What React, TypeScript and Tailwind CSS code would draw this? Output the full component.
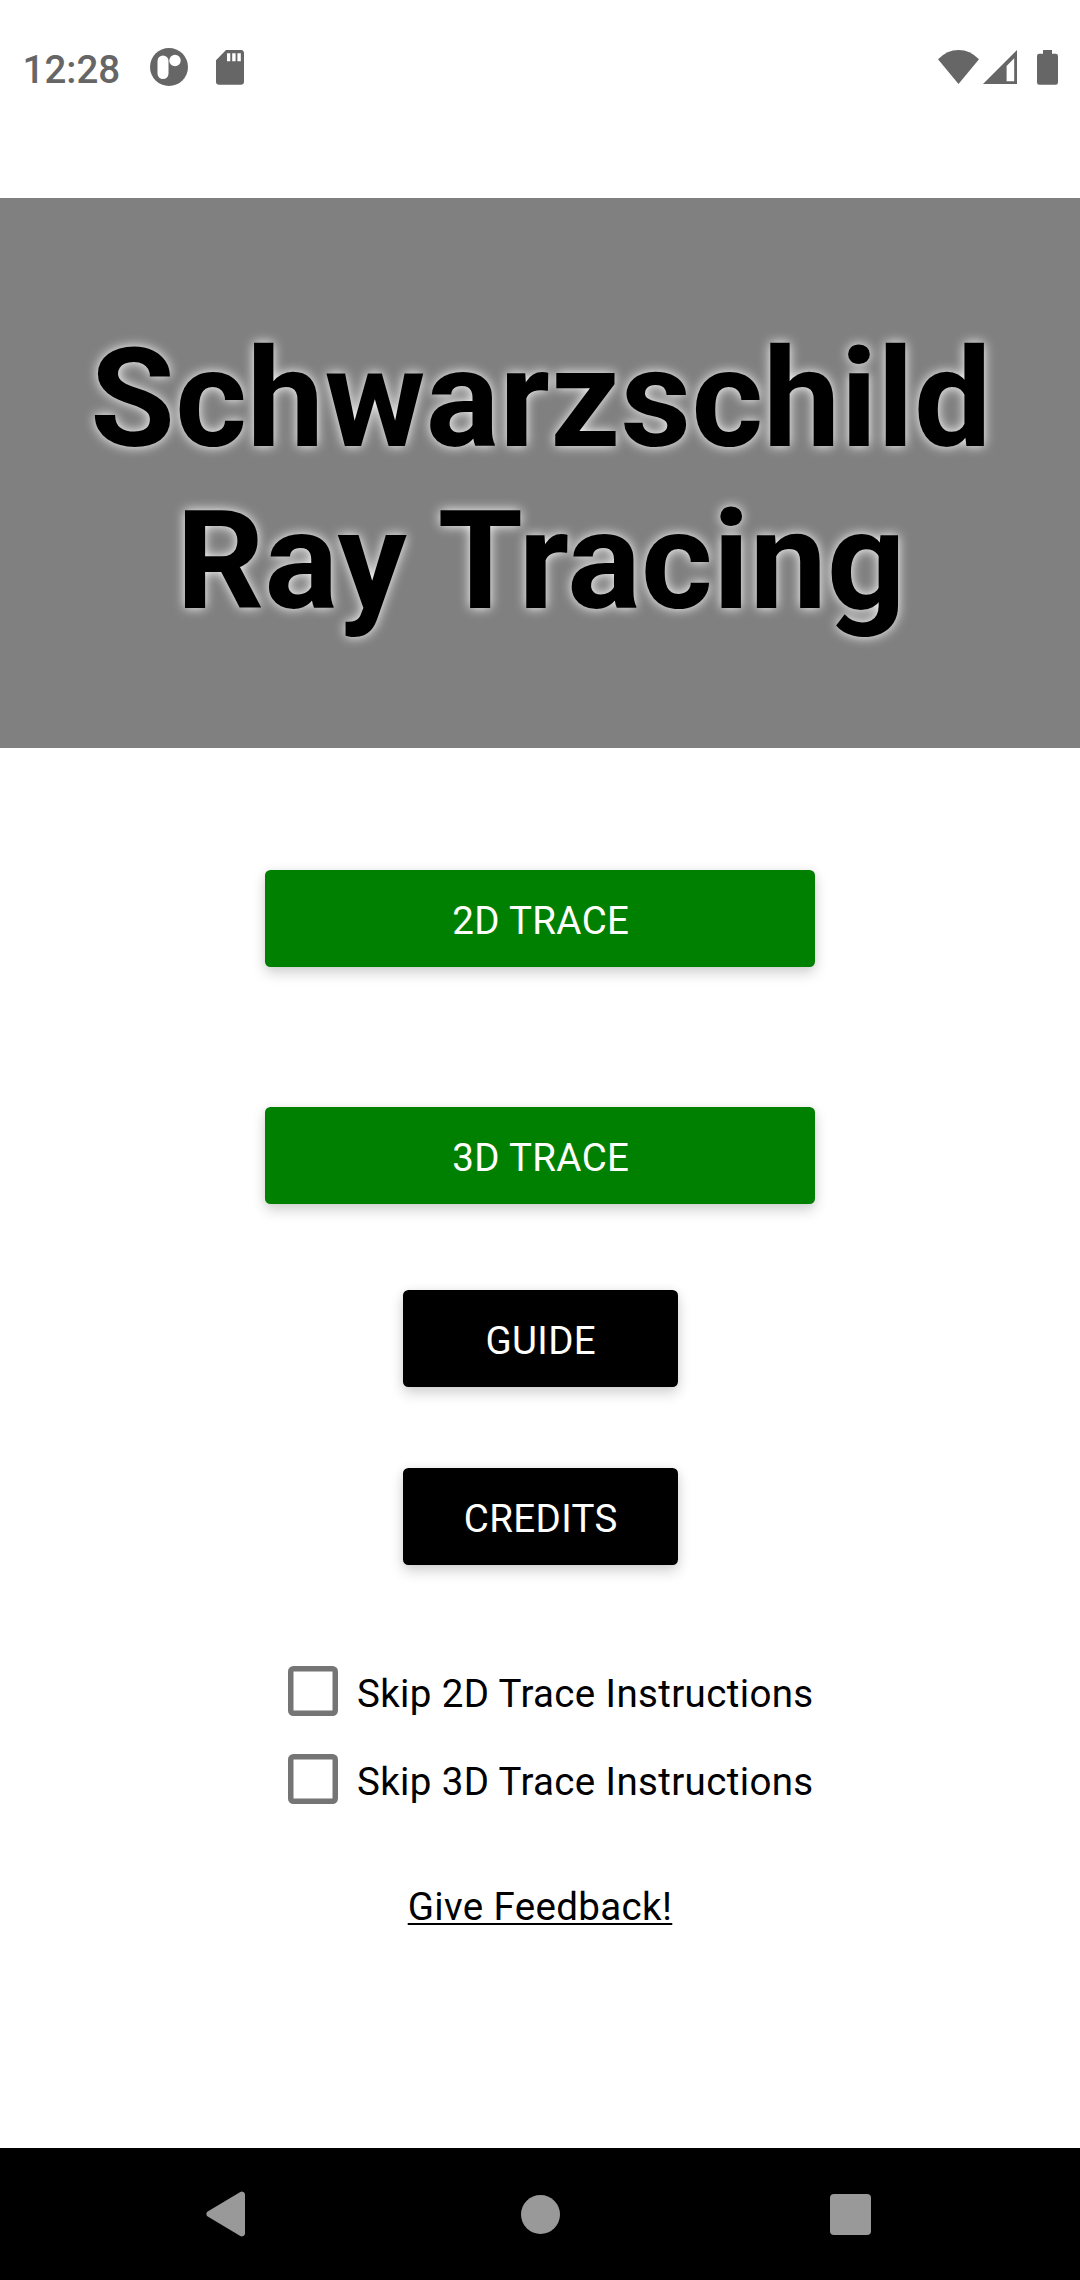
import React from "react";

function StatusBar() {
  return (
    <header className="flex h-[198px] items-start justify-between">
      <div className="flex h-[134px] items-center pl-[22.5px]">
        <span className="w-[127.5px] pt-[6px] text-[38.5px] leading-[46px] font-medium text-[#666]">12:28</span>
        <svg className="h-[38px] w-[38px]" viewBox="0 0 38 38">
          <circle cx="19" cy="19" r="19" fill="#666" />
          <rect x="7.5" y="7.5" width="11" height="23.5" rx="5.5" fill="#fff" />
          <circle cx="25" cy="12.5" r="5.7" fill="#fff" />
        </svg>
        <svg className="ml-[28px] h-[35px] w-[28px]" viewBox="0 0 28 35">
          <path
            fill="#666"
            fillRule="evenodd"
            d="M10 0H24.5A3.3 3.3 0 0 1 28 3.3V31.5A3.3 3.3 0 0 1 24.7 34.8H3.4A3.3 3.3 0 0 1 0 31.5V10.2ZM11 3.3V11.3H14.3V3.3ZM16.2 3.3V11.3H19.6V3.3ZM21.4 3.3V11.3H24.8V3.3Z"
          />
        </svg>
      </div>
      <div className="flex h-[134px] items-center pr-[22px]">
        <svg className="h-[34px] w-[41px]" viewBox="0 0 41 34">
          <path fill="#666" d="M0 9.3Q9 0 20.5 0T41 9.3L20.5 34Z" />
        </svg>
        <svg className="ml-[4px] h-[34px] w-[34px]" viewBox="0 0 34 34">
          <path fill="#666" fillRule="evenodd" d="M34 0V34H0ZM23.6 16V31.2H31.2V8.3Z" />
        </svg>
        <svg className="ml-[20px] h-[35px] w-[21px]" viewBox="0 0 21 35">
          <path
            fill="#666"
            d="M6 0H15V3.7H18.7A2.3 2.3 0 0 1 21 6V32.5A2.3 2.3 0 0 1 18.7 34.8H2.3A2.3 2.3 0 0 1 0 32.5V6A2.3 2.3 0 0 1 2.3 3.7H6Z"
          />
        </svg>
      </div>
    </header>
  );
}

const buttonBase =
  "flex h-[97px] items-center justify-center rounded-[5.5px] pt-[5px] pl-[1.5px] text-[38.5px] leading-[46px] tracking-[0.36px] text-white shadow-[0_6px_14px_rgba(0,0,0,0.18),0_0_10px_rgba(0,0,0,0.05)]";

function SkipOption({ label }: { label: string }) {
  return (
    <label className="flex h-[88px] items-center">
      <span className="h-[50px] w-[50px] shrink-0 rounded-[5.5px] shadow-[inset_0_0_0_5.5px_#757575]" />
      <span className="ml-[19px] pt-[6px] text-[38.5px] leading-[46px] tracking-[0.36px] whitespace-nowrap">
        {label}
      </span>
    </label>
  );
}

function NavigationBar() {
  return (
    <nav className="flex h-[132px] items-center bg-black text-[#999]">
      <svg className="ml-[206px] h-[46px] w-[39px]" viewBox="0 0 39 46" fill="currentColor">
        <path d="M1.7 20.6 34.3 1A3.1 3.1 0 0 1 39 3.6V42.4A3.1 3.1 0 0 1 34.3 45L1.7 25.4A2.8 2.8 0 0 1 1.7 20.6Z" />
      </svg>
      <span className="ml-[276px] h-[39px] w-[39px] rounded-full bg-current" />
      <span className="ml-[270px] h-[41px] w-[41px] rounded-[4px] bg-current" />
    </nav>
  );
}

export default function App() {
  return (
    <div className="flex h-[2280px] w-[1080px] flex-col overflow-hidden bg-white font-['Roboto',sans-serif] text-black">
      <StatusBar />
      <section className="h-[550px] bg-[#808080] pt-[120px]">
        <h1 className="pl-[2px] text-center text-[137.5px] leading-[162px] font-bold tracking-[0.3px] [text-shadow:0_0_12px_#fff]">
          Schwarzschild
          <br />
          Ray Tracing
        </h1>
      </section>
      <main className="flex flex-1 flex-col items-center pt-[122px]">
        <button className={`${buttonBase} w-[550px] bg-[#008000]`}>2D TRACE</button>
        <button className={`${buttonBase} mt-[140px] w-[550px] bg-[#008000]`}>3D TRACE</button>
        <button className={`${buttonBase} mt-[86px] w-[275px] bg-black`}>GUIDE</button>
        <button className={`${buttonBase} mt-[81px] w-[275px] bg-black`}>CREDITS</button>
        <div className="mt-[82px] w-[504px]">
          <SkipOption label="Skip 2D Trace Instructions" />
          <SkipOption label="Skip 3D Trace Instructions" />
        </div>
        <a className="mt-[61px] text-[38.5px] leading-[46px] tracking-[0.36px] underline decoration-[2px] underline-offset-[3px]">
          Give Feedback!
        </a>
      </main>
      <NavigationBar />
    </div>
  );
}
